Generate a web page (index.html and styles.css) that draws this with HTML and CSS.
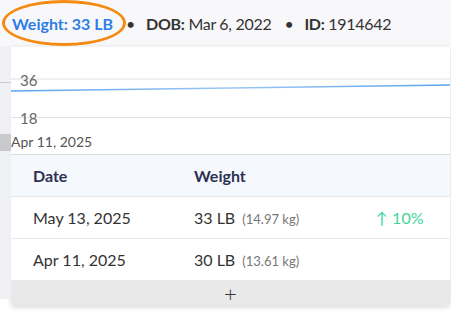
FILE: index.html
```html
<!DOCTYPE html>
<html lang="en">
<head>
    <meta charset="UTF-8">
    <title>Pet Weight</title>
    <link rel="stylesheet" href="styles.css">
</head>
<body>
    <!-- Summary line at the top -->
    <div class="summary">
        <span class="weight-tag">Weight: 33 LB</span>
        <span class="dot">&bull;</span>
        <span><b>DOB:</b> Mar 6, 2022</span>
        <span class="dot">&bull;</span>
        <span><b>ID:</b> 1914642</span>
    </div>

    <div class="stage">
        <div class="backdrop">
            <div class="bd-line"></div>
            <div class="bd-block"></div>
        </div>

        <!-- Weight history popup -->
        <div class="card">
            <div class="chart">
                <div class="grid grid-top"></div>
                <div class="grid grid-bottom"></div>
                <span class="tick tick-36">36</span>
                <span class="tick tick-18">18</span>
                <svg class="trend" viewBox="0 0 440 10" preserveAspectRatio="none">
                    <defs>
                        <linearGradient id="lineGrad" x1="0" x2="1" y1="0" y2="0">
                            <stop offset="0" stop-color="#5aa2ee"/>
                            <stop offset="0.5" stop-color="#9cc8f5"/>
                            <stop offset="1" stop-color="#5aa2ee"/>
                        </linearGradient>
                    </defs>
                    <line x1="0" y1="7" x2="440" y2="1" stroke="url(#lineGrad)" stroke-width="1.5"/>
                </svg>
                <span class="chart-date">Apr 11, 2025</span>
            </div>

            <div class="table">
                <div class="row head">
                    <span>Date</span>
                    <span>Weight</span>
                    <span></span>
                </div>
                <div class="row">
                    <span>May 13, 2025</span>
                    <span>33 LB <small>(14.97 kg)</small></span>
                    <span class="change">&#8593; 10%</span>
                </div>
                <div class="row">
                    <span>Apr 11, 2025</span>
                    <span>30 LB <small>(13.61 kg)</small></span>
                    <span></span>
                </div>
            </div>

            <button class="add-button">+</button>
        </div>
    </div>
</body>
</html>
```

FILE: styles.css
```css
* {
    box-sizing: border-box;
}
body {
    margin: 0;
    font-family: Lato, "Noto Sans", sans-serif;
    font-size: 16px;
    color: #333;
    background-color: #ffffff;
    width: 451px;
    height: 313px;
    overflow: hidden;
}
.summary {
    height: 46px;
    display: flex;
    align-items: center;
    gap: 11px;
    padding-left: 12px;
    background-color: #f8f8fa;
    color: #333;
    letter-spacing: -0.3px;
}
.summary b {
    font-weight: 700;
}
.weight-tag {
    position: relative;
    color: #2f7ee6;
    font-weight: 700;
    letter-spacing: 0;
}
.weight-tag::after {
    content: "";
    position: absolute;
    left: -10px;
    right: -13px;
    top: -14px;
    bottom: -13px;
    border: 3px solid #f58a12;
    border-radius: 50%;
}
.dot {
    margin: 0 0 0 2px;
}
.stage {
    display: flex;
    height: 267px;
}
.backdrop {
    position: relative;
    width: 11px;
    flex-shrink: 0;
    background-color: #eef0f3;
    height: 253px;
}
.bd-line {
    position: absolute;
    left: 0;
    right: 0;
    top: 36px;
    height: 1px;
    background-color: #c8cbd0;
}
.bd-block {
    position: absolute;
    left: 0;
    right: 0;
    top: 88px;
    height: 17px;
    background-color: #c9cacd;
}
.card {
    flex: 1;
    margin-top: 1px;
    margin-right: 1px;
    height: 259px;
    background-color: #fff;
    border-radius: 0 0 4px 4px;
    box-shadow: 0 1px 5px rgba(0, 0, 0, 0.18);
    display: flex;
    flex-direction: column;
    overflow: hidden;
}
.chart {
    position: relative;
    height: 108px;
    border-bottom: 1px solid #dcdcdc;
    flex-shrink: 0;
}
.grid {
    position: absolute;
    left: 0;
    right: 0;
}
.grid-top {
    top: 31px;
    height: 2px;
    background-color: #f0f0f0;
}
.grid-bottom {
    top: 70px;
    height: 1px;
    background-color: #e2e2e2;
}
.tick {
    position: absolute;
    left: 9px;
    font-size: 15px;
    color: #666;
    line-height: 16px;
}
.tick-36 {
    top: 25px;
}
.tick-18 {
    top: 63px;
}
.trend {
    position: absolute;
    left: 0;
    top: 37px;
    width: 100%;
    height: 10px;
}
.chart-date {
    position: absolute;
    left: 0;
    top: 86px;
    font-size: 14px;
    color: #555;
}
.table {
    flex-shrink: 0;
}
.row {
    display: grid;
    grid-template-columns: 161px 182px 1fr;
    align-items: center;
    height: 42px;
    padding-left: 22px;
    border-bottom: 1px solid #e6e8ec;
}
.row.head {
    background-color: #f5f8fc;
    font-weight: 700;
    color: #2d3152;
}
.row small {
    font-size: 13px;
    color: #777;
    margin-left: 3px;
}
.change {
    color: #3fd49a;
}
.add-button {
    flex: 1;
    border: none;
    background-color: #e9e9e9;
    color: #333;
    font-size: 22px;
    font-weight: 300;
    line-height: 1;
    font-family: inherit;
    padding: 0;
    cursor: pointer;
}
```
